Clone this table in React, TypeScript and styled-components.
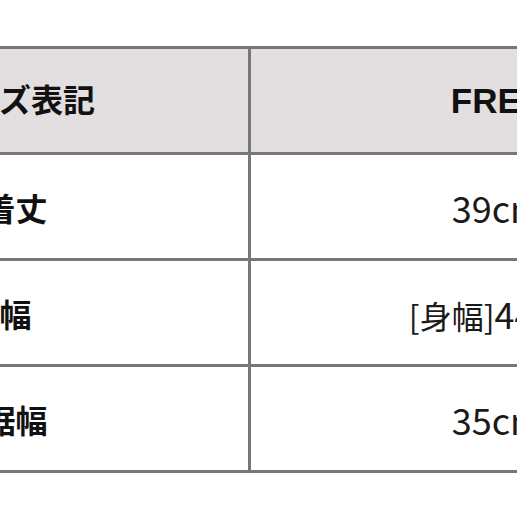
import styled, { createGlobalStyle } from 'styled-components';

const GlobalStyle = createGlobalStyle`
  html, body {
    margin: 0;
    padding: 0;
    background: #ffffff;
  }
  body {
    font-family: "Noto Sans CJK JP", "Noto Sans", sans-serif;
    color: #141414;
  }
`;

const Frame = styled.div`
  width: 517px;
  height: 517px;
  overflow: hidden;
  padding-top: 46px;
  box-sizing: border-box;
`;

const SizeTable = styled.table`
  margin-left: -220px;
  border-collapse: collapse;
  table-layout: fixed;
  width: 964px;

  td,
  th {
    border: 3px solid #777777;
    height: 103px;
    padding: 0;
    text-align: center;
    vertical-align: middle;
    line-height: 1;
    white-space: nowrap;
  }
`;

const LabelCol = styled.col`
  width: 468px;
`;

const ValueCol = styled.col`
  width: 496px;
`;

const HeadCell = styled.th<{ $latin?: boolean }>`
  background: #e3dfe0;
  font-weight: 700;
  font-size: ${({ $latin }) => ($latin ? '35px' : '32px')};
  font-family: "Liberation Sans", "Noto Sans CJK JP", sans-serif;
  color: #111111;
`;

const Label = styled.td`
  font-size: 32px;
  font-weight: 700;
  color: #111111;
`;

const Value = styled.td`
  font-size: 36px;
  font-weight: 400;
  color: #1a1a1a;
`;

const Tag = styled.span`
  font-size: 32px;
`;

const rows = [
  { label: '着丈', tag: '', value: '39cm' },
  { label: '幅', tag: '[身幅]', value: '44cm' },
  { label: '裾幅', tag: '', value: '35cm' },
];

export default function App() {
  return (
    <>
      <GlobalStyle />
      <Frame>
        <SizeTable>
          <colgroup>
            <LabelCol />
            <ValueCol />
          </colgroup>
          <thead>
            <tr>
              <HeadCell>サイズ表記</HeadCell>
              <HeadCell $latin>FREE</HeadCell>
            </tr>
          </thead>
          <tbody>
            {rows.map((row) => (
              <tr key={row.label}>
                <Label>{row.label}</Label>
                <Value>
                  {row.tag && <Tag>{row.tag}</Tag>}
                  {row.value}
                </Value>
              </tr>
            ))}
          </tbody>
        </SizeTable>
      </Frame>
    </>
  );
}
